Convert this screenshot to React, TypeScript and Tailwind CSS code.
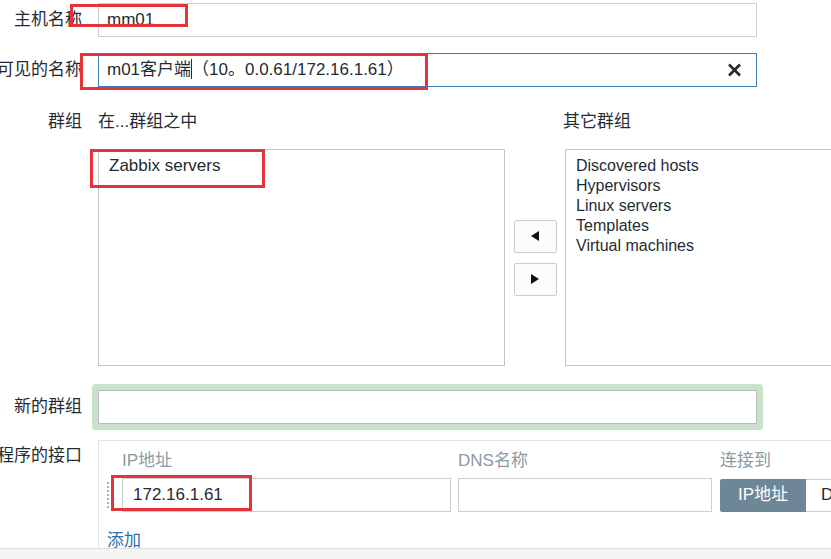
import React from "react";

const labelCls =
  "w-[82px] shrink-0 flex justify-end whitespace-nowrap text-[17px] leading-[24px] text-[#1f2c33]";

const Row: React.FC<{ label: string; top?: boolean; labelPad?: boolean; className?: string; children: React.ReactNode }> = ({
  label,
  top,
  labelPad,
  className = "",
  children,
}) => (
  <div className={`flex ${top ? "items-start" : "items-center"} ${className}`}>
    <div className={`${labelCls} ${labelPad ? "pt-[4px]" : ""}`}>{label}</div>
    <div className="ml-[16px]">{children}</div>
  </div>
);

const RedBox: React.FC<{ className: string }> = ({ className }) => (
  <div className={`absolute border-[3px] border-[#e5333b] pointer-events-none ${className}`} />
);

const Triangle: React.FC<{ dir: "left" | "right" }> = ({ dir }) => (
  <svg width="8" height="10" viewBox="0 0 8 10">
    {dir === "left" ? <polygon points="8,0 8,10 0,5" fill="#111" /> : <polygon points="0,0 0,10 8,5" fill="#111" />}
  </svg>
);

const otherGroups = ["Discovered hosts", "Hypervisors", "Linux servers", "Templates", "Virtual machines"];

export default function App() {
  return (
    <div className="relative w-[831px] h-[559px] overflow-hidden bg-white flex flex-col font-['Liberation_Sans','Noto_Sans_CJK_SC',sans-serif] text-[#1f2c33]">
      <div className="h-[548px] shrink-0 overflow-hidden pt-[3px]">
        <Row label="主机名称">
          <div className="w-[659px] h-[34px] border border-[#cfcfcf] flex items-center pl-[8px] text-[17px]">mm01</div>
        </Row>

        <Row label="可见的名称" className="mt-[16px]">
          <div className="w-[659px] h-[34px] border border-[#3f80b3] flex items-center pl-[8px] pr-[14px] text-[17px]">
            <span className="whitespace-nowrap">
              m01客户端
              <span className="inline-block w-px h-[20px] bg-[#1f2c33] align-middle -mt-[3px]" />
              （10。0.0.61/172.16.1.61）
            </span>
            <svg className="ml-auto" width="15" height="14" viewBox="0 0 15 14">
              <path d="M2 1.5 L13 12.5 M13 1.5 L2 12.5" stroke="#1f2c33" strokeWidth="2.6" />
            </svg>
          </div>
        </Row>

        <Row label="群组" top className="mt-[23px]">
          <div className="grid grid-cols-[407px_60px_300px]">
            <div className="text-[17px] leading-[24px] h-[24px]">在...群组之中</div>
            <div />
            <div className="text-[17px] leading-[24px] -ml-[2px]">其它群组</div>

            <div className="mt-[15px] h-[217px] border border-[#c5c5c5] pl-[10px] pt-[6px] text-[17px] leading-[20px]">
              Zabbix servers
            </div>
            <div className="mt-[15px] h-[217px] flex flex-col items-center justify-center gap-[10px]">
              <button className="w-[43px] h-[33px] border border-[#cccccc] rounded-[2px] bg-[#fcfcfc] flex items-center justify-center">
                <Triangle dir="left" />
              </button>
              <button className="w-[43px] h-[33px] border border-[#cccccc] rounded-[2px] bg-[#fcfcfc] flex items-center justify-center">
                <Triangle dir="right" />
              </button>
            </div>
            <div className="mt-[15px] h-[217px] border border-[#c5c5c5] pl-[10px] pt-[6px] text-[16px] leading-[20px]">
              {otherGroups.map((g) => (
                <div key={g}>{g}</div>
              ))}
            </div>
          </div>
        </Row>

        <Row label="新的群组" className="mt-[24px]">
          <div className="w-[659px] h-[34px] border border-[#b9b9b9] bg-white shadow-[0_0_0_6px_#c8e3c9] rounded-[1px]" />
        </Row>

        <Row label="程序的接口" top labelPad className="mt-[16px]">
          <div className="w-[760px] h-[140px] border border-[#e3e3e3] bg-white pt-[8px]">
            <div className="flex text-[17px] leading-[24px] text-[#8b9aa3] whitespace-nowrap">
              <div className="w-[23px] shrink-0" />
              <div className="w-[336px] shrink-0">IP地址</div>
              <div className="w-[262px] shrink-0">DNS名称</div>
              <div className="shrink-0">连接到</div>
            </div>
            <div className="flex items-center mt-[5px] h-[34px] whitespace-nowrap">
              <div className="w-[23px] shrink-0 flex pl-[8px]">
                <div className="h-[26px] border-l-2 border-dotted border-[#9fb3bf]" />
              </div>
              <div className="w-[329px] shrink-0 h-[34px] border border-[#cfcfcf] flex items-center pl-[10px] text-[17px] text-[#1f2c33]">
                172.16.1.61
              </div>
              <div className="w-[7px] shrink-0" />
              <div className="w-[254px] shrink-0 h-[34px] border border-[#cfcfcf]" />
              <div className="w-[8px] shrink-0" />
              <div className="flex h-[33px] shrink-0">
                <div className="w-[86px] bg-[#6d8796] text-white text-[17px] flex items-center justify-center rounded-l-[2px]">
                  IP地址
                </div>
                <div className="w-[80px] border border-[#cfcfcf] border-l-0 text-[17px] flex items-center pl-[15px] text-[#1f2c33]">
                  DNS
                </div>
              </div>
            </div>
            <div className="mt-[17px] pl-[8px] text-[17px] leading-[24px] text-[#2f6fad]">添加</div>
          </div>
        </Row>
      </div>
      <div className="flex-1 border-t border-[#dedede] bg-[#f5f5f5]" />

      <RedBox className="left-[70px] top-[4px] w-[118px] h-[23px]" />
      <RedBox className="left-[80px] top-[53px] w-[348px] h-[37px]" />
      <RedBox className="left-[90px] top-[149px] w-[175px] h-[39px]" />
      <RedBox className="left-[111px] top-[475px] w-[141px] h-[36px]" />
    </div>
  );
}
